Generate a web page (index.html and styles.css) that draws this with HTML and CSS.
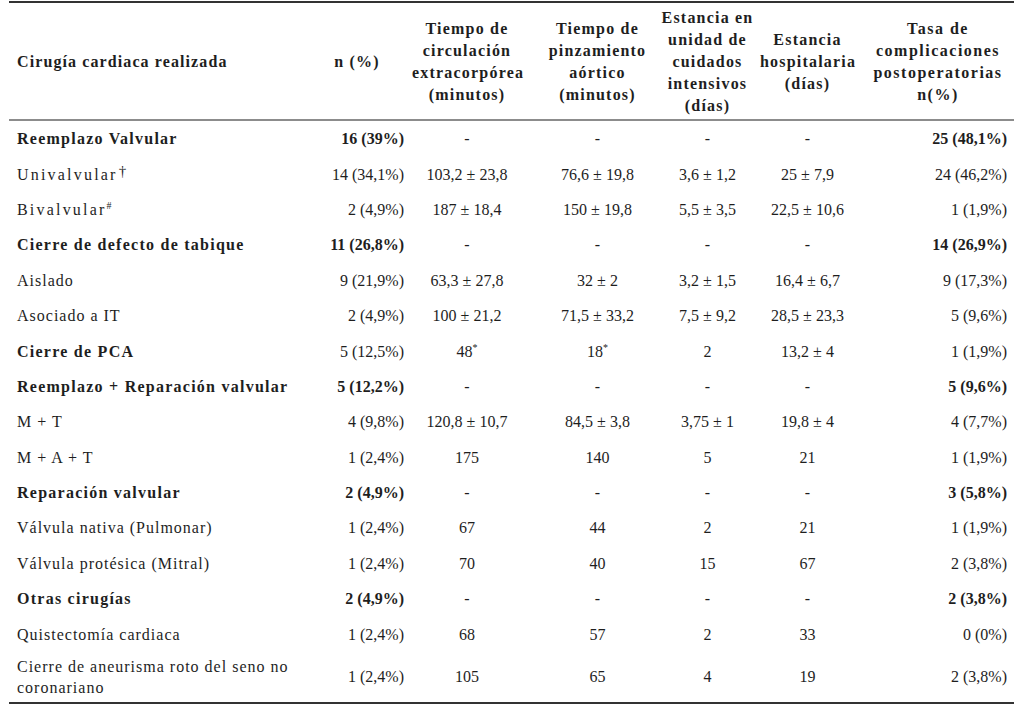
FILE: index.html
```html
<!DOCTYPE html>
<html lang="es">
<head>
<meta charset="utf-8">
<title>Tabla</title>
<link rel="stylesheet" href="styles.css">
</head>
<body>
<table class="tbl">
  <colgroup>
    <col class="c1"><col class="c2"><col class="c3"><col class="c4"><col class="c5"><col class="c6"><col class="c7">
  </colgroup>
  <thead>
    <tr>
      <th class="h1">Cirugía cardiaca realizada</th>
      <th class="h2">n (%)</th>
      <th class="h3">Tiempo de<br>circulación<br>extracorpórea<br>(minutos)</th>
      <th class="h4">Tiempo de<br>pinzamiento<br>aórtico<br>(minutos)</th>
      <th class="h5">Estancia en<br>unidad de<br>cuidados<br>intensivos<br>(días)</th>
      <th class="h6">Estancia<br>hospitalaria<br>(días)</th>
      <th class="h7">Tasa de<br>complicaciones<br>postoperatorias<br>n(%)</th>
    </tr>
  </thead>
  <tbody>
    <tr class="grp"><td>Reemplazo Valvular</td><td>16 (39%)</td><td>-</td><td>-</td><td>-</td><td>-</td><td>25 (48,1%)</td></tr>
    <tr><td><span class="wide">Univalvular</span><sup class="dag">†</sup></td><td>14 (34,1%)</td><td>103,2 ± 23,8</td><td>76,6 ± 19,8</td><td>3,6 ± 1,2</td><td>25 ± 7,9</td><td>24 (46,2%)</td></tr>
    <tr><td><span class="wide">Bivalvular</span><sup class="sm">#</sup></td><td>2 (4,9%)</td><td>187 ± 18,4</td><td>150 ± 19,8</td><td>5,5 ± 3,5</td><td>22,5 ± 10,6</td><td>1 (1,9%)</td></tr>
    <tr class="grp"><td>Cierre de defecto de tabique</td><td>11 (26,8%)</td><td>-</td><td>-</td><td>-</td><td>-</td><td>14 (26,9%)</td></tr>
    <tr><td>Aislado</td><td>9 (21,9%)</td><td>63,3 ± 27,8</td><td>32 ± 2</td><td>3,2 ± 1,5</td><td>16,4 ± 6,7</td><td>9 (17,3%)</td></tr>
    <tr><td>Asociado a IT</td><td>2 (4,9%)</td><td>100 ± 21,2</td><td>71,5 ± 33,2</td><td>7,5 ± 9,2</td><td>28,5 ± 23,3</td><td>5 (9,6%)</td></tr>
    <tr class="grp"><td>Cierre de PCA</td><td class="nb">5 (12,5%)</td><td>48<sup class="sm">*</sup></td><td>18<sup class="sm">*</sup></td><td>2</td><td>13,2 ± 4</td><td class="nb">1 (1,9%)</td></tr>
    <tr class="grp"><td>Reemplazo + Reparación valvular</td><td>5 (12,2%)</td><td>-</td><td>-</td><td>-</td><td>-</td><td>5 (9,6%)</td></tr>
    <tr><td>M + T</td><td>4 (9,8%)</td><td>120,8 ± 10,7</td><td>84,5 ± 3,8</td><td>3,75 ± 1</td><td>19,8 ± 4</td><td>4 (7,7%)</td></tr>
    <tr><td>M + A + T</td><td>1 (2,4%)</td><td>175</td><td>140</td><td>5</td><td>21</td><td>1 (1,9%)</td></tr>
    <tr class="grp"><td>Reparación valvular</td><td>2 (4,9%)</td><td>-</td><td>-</td><td>-</td><td>-</td><td>3 (5,8%)</td></tr>
    <tr><td>Válvula nativa (Pulmonar)</td><td>1 (2,4%)</td><td>67</td><td>44</td><td>2</td><td>21</td><td>1 (1,9%)</td></tr>
    <tr><td>Válvula protésica (Mitral)</td><td>1 (2,4%)</td><td>70</td><td>40</td><td>15</td><td>67</td><td>2 (3,8%)</td></tr>
    <tr class="grp"><td>Otras cirugías</td><td>2 (4,9%)</td><td>-</td><td>-</td><td>-</td><td>-</td><td>2 (3,8%)</td></tr>
    <tr><td>Quistectomía cardiaca</td><td>1 (2,4%)</td><td>68</td><td>57</td><td>2</td><td>33</td><td>0 (0%)</td></tr>
    <tr class="last"><td>Cierre de aneurisma roto del seno no<br>coronariano</td><td>1 (2,4%)</td><td>105</td><td>65</td><td>4</td><td>19</td><td>2 (3,8%)</td></tr>
  </tbody>
</table>
</body>
</html>
```

FILE: styles.css
```css
html, body {
  margin: 0;
  padding: 0;
  background: #ffffff;
}

body {
  padding-top: 1px;
  font-family: "Liberation Serif", "Times New Roman", serif;
  color: #1e1e1e;
}

.tbl {
  margin-left: 9px;
  width: 1005px;
  border-collapse: collapse;
  table-layout: fixed;
  font-size: 16px;
}

.c1 { width: 321px; }
.c2 { width: 82px; }
.c3 { width: 128px; }
.c4 { width: 115px; }
.c5 { width: 105px; }
.c6 { width: 95px; }
.c7 { width: 159px; }

.tbl th {
  height: 114px;
  padding: 2px 0 0 0;
  font-weight: bold;
  line-height: 22px;
  text-align: center;
  vertical-align: middle;
  border-top: 2px solid #333333;
  border-bottom: 2px solid #8c8c8c;
  letter-spacing: 1.2px;
  white-space: nowrap;
}

.tbl th.h1 { text-align: left; padding-left: 8px; letter-spacing: 1.1px; }
.tbl th.h2 { padding-right: 28px; }
.tbl th.h3 { padding-right: 18px; }
.tbl th.h7 { padding-left: 13px; padding-right: 6px; letter-spacing: 1.5px; }

.tbl td {
  height: 35.4px;
  padding: 0;
  line-height: 21px;
  text-align: center;
  vertical-align: middle;
  white-space: nowrap;
}

.tbl td:nth-child(1) { text-align: left; padding-left: 8px; letter-spacing: 1px; }
.tbl td:nth-child(2) { text-align: right; padding-right: 8px; }
.tbl td:nth-child(3) { padding-right: 18px; }
.tbl td:nth-child(7) { text-align: right; padding-right: 7px; }

.tbl tr.grp td:nth-child(1),
.tbl tr.grp td:nth-child(2),
.tbl tr.grp td:nth-child(7) {
  font-weight: bold;
}

.tbl tr.grp td:nth-child(1) { letter-spacing: 1.25px; }

.tbl tr.grp td.nb { font-weight: normal; }

.tbl tr.last td {
  height: 50px;
  border-bottom: 2px solid #333333;
}

.wide { letter-spacing: 2.2px; }

.sm {
  font-size: 10px;
  line-height: 0;
  vertical-align: 6px;
  letter-spacing: 0;
}

.dag {
  font-size: 15px;
  line-height: 0;
  vertical-align: 4px;
  padding-left: 1px;
  letter-spacing: 0;
}
```
